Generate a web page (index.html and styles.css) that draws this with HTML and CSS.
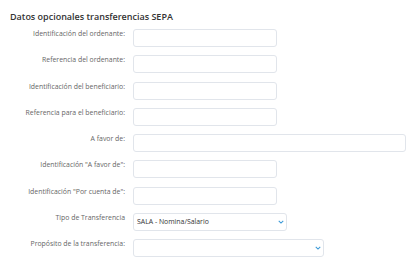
FILE: index.html
```
<!DOCTYPE html>
<html lang="es">
<head>
    <meta charset="UTF-8">
    <meta name="viewport" content="width=device-width, initial-scale=1.0">
    <title>Datos opcionales transferencias SEPA</title>
    <link rel="stylesheet" href="styles.css">
</head>
<body>
    <div class="panel">
        <h2>Datos opcionales transferencias SEPA</h2>
        <form class="sepa-form">
            <div class="row">
                <label for="idOrdenante">Identificación del ordenante:</label>
                <input type="text" id="idOrdenante" class="field short">
            </div>
            <div class="row">
                <label for="refOrdenante">Referencia del ordenante:</label>
                <input type="text" id="refOrdenante" class="field short">
            </div>
            <div class="row">
                <label for="idBeneficiario">Identificación del beneficiario:</label>
                <input type="text" id="idBeneficiario" class="field short">
            </div>
            <div class="row">
                <label for="refBeneficiario">Referencia para el beneficiario:</label>
                <input type="text" id="refBeneficiario" class="field short">
            </div>
            <div class="row">
                <label for="aFavor">A favor de:</label>
                <input type="text" id="aFavor" class="field wide">
            </div>
            <div class="row">
                <label for="idAFavor">Identificación "A favor de":</label>
                <input type="text" id="idAFavor" class="field short">
            </div>
            <div class="row">
                <label for="idPorCuenta">Identificación "Por cuenta de":</label>
                <input type="text" id="idPorCuenta" class="field short">
            </div>
            <div class="row">
                <label for="tipo">Tipo de Transferencia</label>
                <div class="select-wrap tipo">
                    <select id="tipo" class="field">
                        <option>SALA - Nomina/Salario</option>
                    </select>
                    <svg class="chevron" viewBox="0 0 8 5" width="6" height="4"><path d="M1 1l3 3 3-3" fill="none" stroke="#3b9ad8" stroke-width="1.4"/></svg>
                </div>
            </div>
            <div class="row">
                <label for="proposito">Propósito de la transferencia:</label>
                <div class="select-wrap proposito">
                    <select id="proposito" class="field">
                        <option></option>
                    </select>
                    <svg class="chevron" viewBox="0 0 8 5" width="6" height="4"><path d="M1 1l3 3 3-3" fill="none" stroke="#3b9ad8" stroke-width="1.4"/></svg>
                </div>
            </div>
        </form>
    </div>
</body>
</html>
```

FILE: styles.css
```
body {
    margin: 0;
    background-color: white;
    font-family: 'Open Sans', sans-serif;
}
.panel {
    padding: 10px 0 0 10px;
}
h2 {
    margin: 0 0 5px;
    font-size: 9px;
    font-weight: 600;
    line-height: 14px;
    color: #333;
}
.sepa-form {
    display: flex;
    flex-direction: column;
    gap: 8.25px;
}
.row {
    display: grid;
    grid-template-columns: 115px auto;
    column-gap: 8px;
    align-items: start;
    height: 18px;
}
label {
    text-align: right;
    font-size: 6.9px;
    line-height: 10px;
    padding-top: 0;
    color: #666;
}
.field {
    display: block;
    box-sizing: border-box;
    height: 18px;
    margin: 0;
    padding: 0 3px;
    border: 1px solid #e1e5eb;
    border-radius: 3px;
    background-color: white;
    font-family: 'Open Sans', sans-serif;
    font-size: 6.9px;
    color: #333;
    outline: none;
}
.short {
    width: 144px;
}
.wide {
    width: 273px;
}
.select-wrap {
    position: relative;
    height: 18px;
}
.select-wrap .field {
    width: 100%;
    appearance: none;
    -webkit-appearance: none;
}
.tipo {
    width: 154px;
}
.proposito {
    width: 191px;
}
.chevron {
    position: absolute;
    right: 3px;
    top: 7px;
}
```
